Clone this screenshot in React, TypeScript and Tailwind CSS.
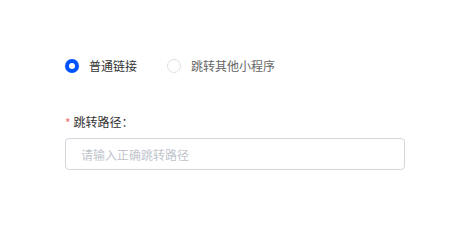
import React, { useState } from "react";

const options = [
  { id: "normal", label: "普通链接" },
  { id: "mini", label: "跳转其他小程序" },
];

function Radio({ checked, label, onClick }: { checked: boolean; label: string; onClick: () => void }) {
  return (
    <button type="button" onClick={onClick} className="flex items-center h-[14px] cursor-pointer">
      <span
        className={
          checked
            ? "flex items-center justify-center w-[14px] h-[14px] rounded-full bg-[#0052ff]"
            : "w-[14px] h-[14px] rounded-full border border-[#dcdfe6] bg-white"
        }
      >
        {checked && <span className="w-[6px] h-[6px] rounded-full bg-white" />}
      </span>
      <span className={"ml-[10px] text-[12px] leading-[14px] " + (checked ? "text-[#333333]" : "text-[#666666]")}>
        {label}
      </span>
    </button>
  );
}

export default function App() {
  const [type, setType] = useState("normal");
  const [path, setPath] = useState("");

  return (
    <div
      className="w-[465px] h-[210px] bg-white pl-[65px] pt-[59px]"
      style={{ fontFamily: '"Noto Sans CJK SC", "Noto Sans", sans-serif' }}
    >
      <div className="flex items-center gap-[30px]">
        {options.map((o) => (
          <Radio key={o.id} checked={type === o.id} label={o.label} onClick={() => setType(o.id)} />
        ))}
      </div>

      <div className="mt-[39px] flex items-center h-[20px] text-[12px] text-[#333333]">
        <span className="text-[#f56c6c] mr-[3px] mt-[2px]">*</span>
        <span>跳转路径：</span>
      </div>

      <input
        value={path}
        onChange={(e) => setPath(e.target.value)}
        placeholder="请输入正确跳转路径"
        className="mt-[6px] block w-[340px] h-[32px] px-[15px] border border-[#d4d7de] rounded-[4px] text-[12px] text-[#333333] placeholder:text-[#c0c4cc] outline-none"
      />
    </div>
  );
}
